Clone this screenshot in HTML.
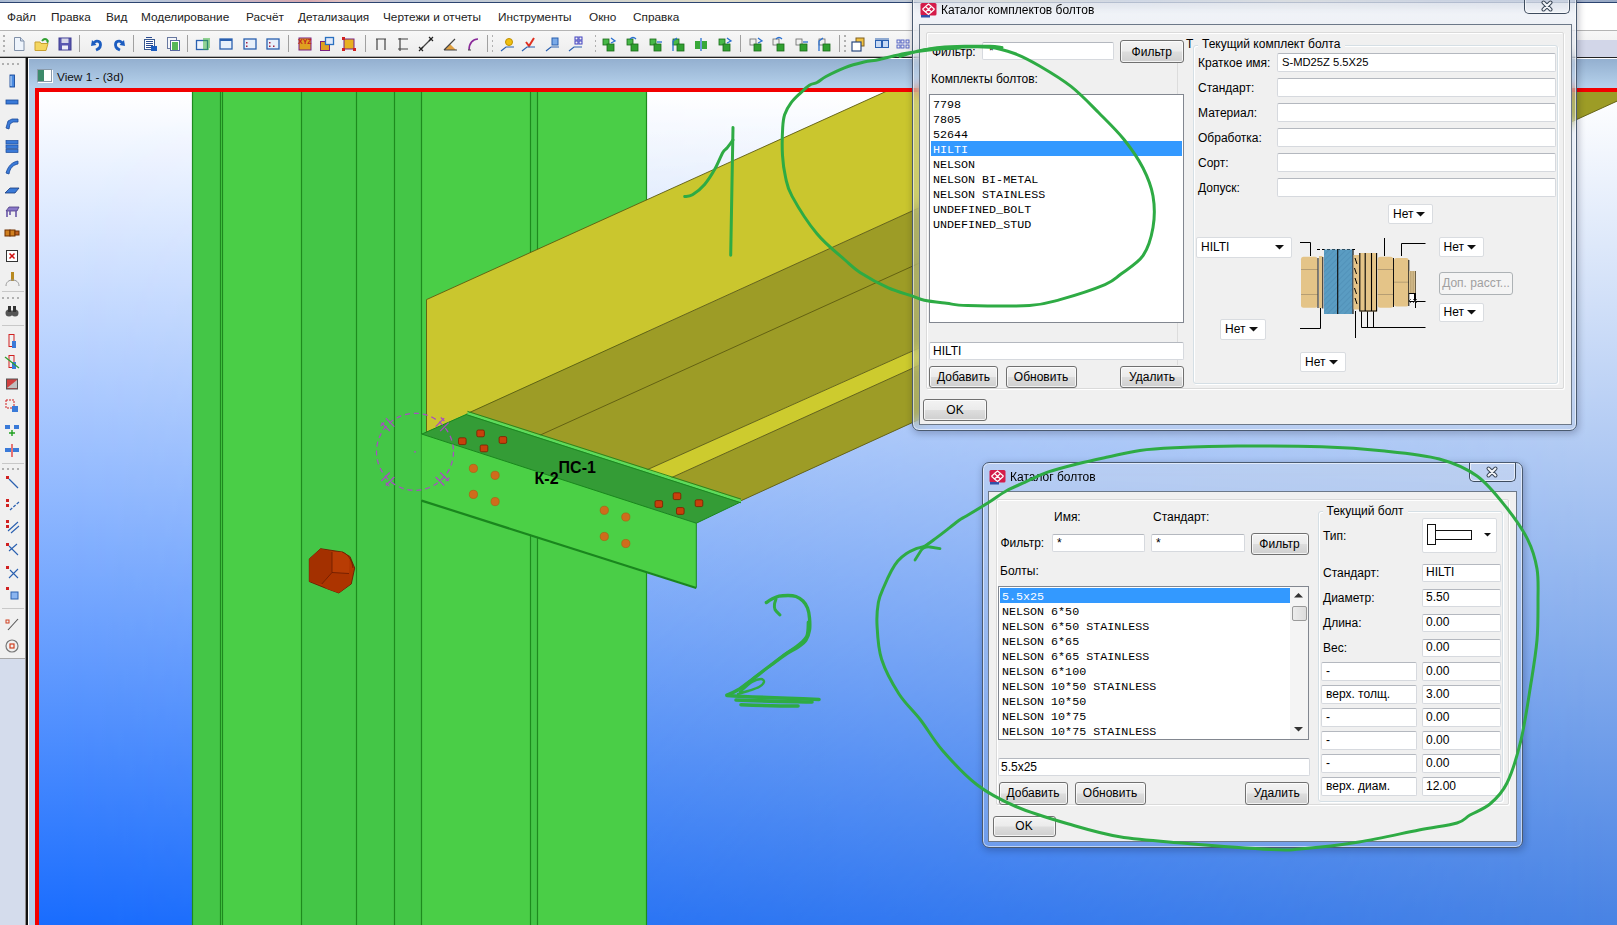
<!DOCTYPE html><html><head><meta charset="utf-8"><style>
*{margin:0;padding:0;box-sizing:border-box}
html,body{width:1617px;height:925px;overflow:hidden;background:#f0f0f0;font-family:"Liberation Sans",sans-serif;font-size:12px;color:#000;position:relative}
.a{position:absolute}
</style></head><body>
<div class="a" style="left:0px;top:0px;width:1617.00px;height:3.00px;background:linear-gradient(90deg,#a8b8d0,#d0d8e4 5%,#b8c4d8 10%,#d8a8b0 19%,#e0c0c0 21%,#b8c4d8 25%,#e0dcc8 45%,#b8c4d8 55%,#e0dcc0 62%,#c0cadc 70%,#d8d8d0 80%,#b0bcd4 90%,#98a8c4)"></div>
<div class="a" style="left:0px;top:2px;width:1617.00px;height:1.00px;background:#2c4470"></div>
<div class="a" style="left:0px;top:3px;width:1617.00px;height:28.00px;background:#fff;border-bottom:1px solid #b4b4b4"></div>
<div class="a" style="left:7px;top:10.13px;font:11.8px/14.16px 'Liberation Sans';color:#222;white-space:pre;">Файл</div>
<div class="a" style="left:51px;top:10.13px;font:11.8px/14.16px 'Liberation Sans';color:#222;white-space:pre;">Правка</div>
<div class="a" style="left:106px;top:10.13px;font:11.8px/14.16px 'Liberation Sans';color:#222;white-space:pre;">Вид</div>
<div class="a" style="left:141px;top:10.13px;font:11.8px/14.16px 'Liberation Sans';color:#222;white-space:pre;">Моделирование</div>
<div class="a" style="left:246px;top:10.13px;font:11.8px/14.16px 'Liberation Sans';color:#222;white-space:pre;">Расчёт</div>
<div class="a" style="left:298px;top:10.13px;font:11.8px/14.16px 'Liberation Sans';color:#222;white-space:pre;">Детализация</div>
<div class="a" style="left:383px;top:10.13px;font:11.8px/14.16px 'Liberation Sans';color:#222;white-space:pre;">Чертежи и отчеты</div>
<div class="a" style="left:498px;top:10.13px;font:11.8px/14.16px 'Liberation Sans';color:#222;white-space:pre;">Инструменты</div>
<div class="a" style="left:589px;top:10.13px;font:11.8px/14.16px 'Liberation Sans';color:#222;white-space:pre;">Окно</div>
<div class="a" style="left:633px;top:10.13px;font:11.8px/14.16px 'Liberation Sans';color:#222;white-space:pre;">Справка</div>
<div class="a" style="left:0px;top:31px;width:1617.00px;height:26.00px;background:linear-gradient(#f7f7f7,#ececec)"></div>
<div class="a" style="left:0px;top:56px;width:1617.00px;height:1.00px;background:#b0b0b0"></div>
<div class="a" style="left:0px;top:57px;width:1617.00px;height:1.00px;background:#222"></div>
<div class="a" style="left:0px;top:58px;width:26.00px;height:867.00px;background:#f0f0f0"></div>
<div class="a" style="left:0px;top:659px;width:25.00px;height:266.00px;background:#d4dcec"></div>
<div class="a" style="left:0px;top:658px;width:25.00px;height:1.00px;background:#a8a8a8"></div>
<div class="a" style="left:25px;top:58px;width:1.00px;height:867.00px;background:#909090"></div>
<div class="a" style="left:26px;top:57px;width:2.00px;height:868.00px;background:#111"></div>
<div class="a" style="left:3px;top:35px;width:1.50px;height:1.50px;background:#b0b0b0"></div>
<div class="a" style="left:3px;top:40px;width:1.50px;height:1.50px;background:#b0b0b0"></div>
<div class="a" style="left:3px;top:45px;width:1.50px;height:1.50px;background:#b0b0b0"></div>
<div class="a" style="left:3px;top:50px;width:1.50px;height:1.50px;background:#b0b0b0"></div>
<svg class="a" style="left:11.0px;top:35.5px" width="16" height="16" viewBox="0 0 16 16"><path d="M3.5 1.5h6l3.5 3.5v9.5h-9.5z" fill="#eef4fc" stroke="#8090a8"/><path d="M9.5 1.5v3.5h3.5" fill="#cfdcee" stroke="#8090a8"/></svg>
<svg class="a" style="left:33.5px;top:35.5px" width="16" height="16" viewBox="0 0 16 16"><path d="M1 6h5l1 1.5h7l-2 7h-11z" fill="#f4d660" stroke="#c8a030"/><path d="M8 5 Q11 1 14 5" stroke="#30a030" stroke-width="2" fill="none"/><path d="M12 5.5l3-1-1 3z" fill="#30a030"/></svg>
<svg class="a" style="left:56.5px;top:35.5px" width="16" height="16" viewBox="0 0 16 16"><rect x="2" y="2" width="12" height="12" fill="#5a58b0" stroke="#3c3a90"/><rect x="4.5" y="2.5" width="7" height="4.5" fill="#d8d8e8"/><rect x="5" y="9.5" width="6" height="4" fill="#f0f0f8"/></svg>
<div class="a" style="left:79px;top:35px;width:1.00px;height:17.00px;background:#a0a0a0"></div>
<svg class="a" style="left:88.0px;top:35.5px" width="16" height="16" viewBox="0 0 16 16"><path d="M4 4 L3 10 L8.5 9" fill="#1b5cc0"/><path d="M5 8 C8 3 14 5 12 11 C11 13 9 13.5 8 14" stroke="#1b5cc0" stroke-width="2.8" fill="none"/></svg>
<svg class="a" style="left:111.5px;top:35.5px" width="16" height="16" viewBox="0 0 16 16"><path d="M12 4 L13 10 L7.5 9" fill="#1b5cc0"/><path d="M11 8 C8 3 2 5 4 11 C5 13 7 13.5 8 14" stroke="#1b5cc0" stroke-width="2.8" fill="none"/></svg>
<div class="a" style="left:133px;top:35px;width:1.00px;height:17.00px;background:#a0a0a0"></div>
<svg class="a" style="left:142.0px;top:35.5px" width="16" height="16" viewBox="0 0 16 16"><rect x="2.5" y="3.5" width="10" height="10" fill="#fff" stroke="#3a5a90"/><path d="M4 1.5h6M4 5.5h7M4 7.5h7M4 9.5h7M4 11.5h5" stroke="#2a4a90" stroke-width="1.1"/><rect x="9" y="10" width="6" height="5" fill="#1b5cc0"/></svg>
<svg class="a" style="left:164.5px;top:35.5px" width="16" height="16" viewBox="0 0 16 16"><rect x="2.5" y="1.5" width="9" height="11" fill="#f4f6fa" stroke="#6878a0"/><rect x="5.5" y="4.5" width="9" height="10" fill="#fff" stroke="#5868a0"/><path d="M7 7h6M7 9h6M7 11h6M7 13h6" stroke="#20a020" stroke-width="1.3"/></svg>
<div class="a" style="left:187px;top:35px;width:1.00px;height:17.00px;background:#a0a0a0"></div>
<svg class="a" style="left:195.0px;top:35.5px" width="16" height="16" viewBox="0 0 16 16"><rect x="1.5" y="4.5" width="11" height="9" fill="#eef4fc" stroke="#2a60b0" stroke-width="1.3"/><path d="M8 3h7M8 5h7M8 7h7M8 9h7M8 11h7M8 13h6" stroke="#30b030" stroke-width="1.2"/></svg>
<svg class="a" style="left:218.0px;top:35.5px" width="16" height="16" viewBox="0 0 16 16"><rect x="2" y="3" width="12" height="10" fill="#e8f0fa" stroke="#2a60b0" stroke-width="1.3"/><rect x="2" y="3" width="12" height="2" fill="#2a60b0"/></svg>
<svg class="a" style="left:242.0px;top:35.5px" width="16" height="16" viewBox="0 0 16 16"><rect x="2" y="3" width="12" height="10" fill="#e8f0fa" stroke="#2a60b0" stroke-width="1.3"/><rect x="4" y="6" width="1.5" height="1.5" fill="#a02040"/><rect x="4" y="9.5" width="1.5" height="1.5" fill="#a02040"/></svg>
<svg class="a" style="left:265.0px;top:35.5px" width="16" height="16" viewBox="0 0 16 16"><rect x="2" y="3" width="12" height="10" fill="#e8f0fa" stroke="#2a60b0" stroke-width="1.3"/><rect x="4" y="6" width="1.5" height="1.5" fill="#a02040"/><rect x="4" y="9.5" width="1.5" height="1.5" fill="#a02040"/><rect x="8" y="9.5" width="1.5" height="1.5" fill="#a02040"/></svg>
<div class="a" style="left:287.5px;top:35px;width:1.00px;height:17.00px;background:#a0a0a0"></div>
<svg class="a" style="left:296.7px;top:35.5px" width="16" height="16" viewBox="0 0 16 16"><rect x="2" y="2" width="12" height="12" fill="#e0a020" stroke="#7a2080"/><text x="1" y="8" font-size="7" font-weight="bold" fill="#c02020" font-family="Liberation Sans">XYZ</text></svg>
<svg class="a" style="left:318.5px;top:35.5px" width="16" height="16" viewBox="0 0 16 16"><rect x="1.5" y="5.5" width="9" height="9" fill="#e0a020" stroke="#7a2080"/><rect x="6.5" y="1.5" width="8" height="7" fill="#dfe8f8" stroke="#2a70c0" stroke-width="1.3"/></svg>
<svg class="a" style="left:341.3px;top:35.5px" width="16" height="16" viewBox="0 0 16 16"><rect x="3" y="3" width="10" height="10" fill="#e8b020" stroke="#7a2080"/><rect x="1" y="1" width="3" height="3" fill="#d02020"/><rect x="12" y="12" width="3" height="3" fill="#d02020"/><rect x="1" y="12" width="3" height="3" fill="#d02020"/></svg>
<div class="a" style="left:364.5px;top:35px;width:1.00px;height:17.00px;background:#a0a0a0"></div>
<svg class="a" style="left:373.0px;top:35.5px" width="16" height="16" viewBox="0 0 16 16"><path d="M3 3h10M4 3v11M12 3v11" stroke="#444" stroke-width="1.2" fill="none"/></svg>
<svg class="a" style="left:394.7px;top:35.5px" width="16" height="16" viewBox="0 0 16 16"><path d="M3 3h10M3 13h10M5 2v13" stroke="#444" stroke-width="1.2" fill="none"/></svg>
<svg class="a" style="left:418.4px;top:35.5px" width="16" height="16" viewBox="0 0 16 16"><path d="M3 13 L13 3" stroke="#444" stroke-width="1.2"/><path d="M1 11l4 4M5 11l-4 4M11 1l4 4M15 1l-4 4" stroke="#222" stroke-width="1.2"/></svg>
<svg class="a" style="left:442.2px;top:35.5px" width="16" height="16" viewBox="0 0 16 16"><path d="M2 14h12L8 8z" fill="#e0a040"/><path d="M2 14 L13 3M2 14h13" stroke="#444" stroke-width="1.2" fill="none"/></svg>
<svg class="a" style="left:465.0px;top:35.5px" width="16" height="16" viewBox="0 0 16 16"><path d="M4 14 C4 7 8 3 13 3" stroke="#8a2a9a" stroke-width="1.6" fill="none"/><path d="M3 14h3" stroke="#444"/></svg>
<div class="a" style="left:486.5px;top:35px;width:1.00px;height:17.00px;background:#a0a0a0"></div>
<div class="a" style="left:491.5px;top:35px;width:1.50px;height:1.50px;background:#b0b0b0"></div>
<div class="a" style="left:491.5px;top:40px;width:1.50px;height:1.50px;background:#b0b0b0"></div>
<div class="a" style="left:491.5px;top:45px;width:1.50px;height:1.50px;background:#b0b0b0"></div>
<div class="a" style="left:491.5px;top:50px;width:1.50px;height:1.50px;background:#b0b0b0"></div>
<svg class="a" style="left:499.6px;top:35.5px" width="16" height="16" viewBox="0 0 16 16"><circle cx="9" cy="6" r="3.5" fill="#f0c010" stroke="#c09000"/><path d="M1 15 L6 11h8" stroke="#2a60b0" stroke-width="1.2" fill="none"/></svg>
<svg class="a" style="left:521.4px;top:35.5px" width="16" height="16" viewBox="0 0 16 16"><path d="M5 6 L8 10 L13 2" stroke="#e03020" stroke-width="2" fill="none"/><path d="M1 15 L6 11h8" stroke="#2a60b0" stroke-width="1.2" fill="none"/></svg>
<svg class="a" style="left:545.0px;top:35.5px" width="16" height="16" viewBox="0 0 16 16"><rect x="7" y="2" width="6" height="7" fill="#7aaae8" stroke="#2a60b0"/><path d="M1 15 L6 11h8" stroke="#2a60b0" stroke-width="1.2" fill="none"/></svg>
<svg class="a" style="left:567.9px;top:35.5px" width="16" height="16" viewBox="0 0 16 16"><rect x="7" y="1" width="3" height="3" fill="none" stroke="#4040c0"/><rect x="11" y="1" width="3" height="3" fill="none" stroke="#4040c0"/><rect x="7" y="5" width="3" height="3" fill="none" stroke="#4040c0"/><rect x="11" y="5" width="3" height="3" fill="none" stroke="#4040c0"/><path d="M1 15 L6 11h8" stroke="#2a60b0" stroke-width="1.2" fill="none"/></svg>
<div class="a" style="left:594.5px;top:35px;width:1.50px;height:1.50px;background:#b0b0b0"></div>
<div class="a" style="left:594.5px;top:40px;width:1.50px;height:1.50px;background:#b0b0b0"></div>
<div class="a" style="left:594.5px;top:45px;width:1.50px;height:1.50px;background:#b0b0b0"></div>
<div class="a" style="left:594.5px;top:50px;width:1.50px;height:1.50px;background:#b0b0b0"></div>
<svg class="a" style="left:601.4px;top:35.5px" width="16" height="16" viewBox="0 0 16 16"><rect x="2" y="3" width="6" height="6" fill="#48b848" stroke="#1a6a1a" stroke-width=".8"/><rect x="6" y="8" width="7" height="7" fill="#30a030" stroke="#1a6a1a" stroke-width=".8"/><path d="M10 2l4 3-4 2" stroke="#2a70d0" stroke-width="1.3" fill="none"/></svg>
<svg class="a" style="left:624.9px;top:35.5px" width="16" height="16" viewBox="0 0 16 16"><rect x="2" y="3" width="6" height="6" fill="#48b848" stroke="#1a6a1a" stroke-width=".8"/><rect x="6" y="8" width="7" height="7" fill="#30a030" stroke="#1a6a1a" stroke-width=".8"/><path d="M5 3 Q8 0 11 3" stroke="#2a70d0" stroke-width="1.3" fill="none"/></svg>
<svg class="a" style="left:648.3px;top:35.5px" width="16" height="16" viewBox="0 0 16 16"><rect x="2" y="3" width="6" height="6" fill="#48b848" stroke="#1a6a1a" stroke-width=".8"/><rect x="6" y="8" width="7" height="7" fill="#30a030" stroke="#1a6a1a" stroke-width=".8"/><path d="M9 6h5" stroke="#2a70d0" stroke-width="1.3"/></svg>
<svg class="a" style="left:670.8px;top:35.5px" width="16" height="16" viewBox="0 0 16 16"><rect x="2" y="3" width="6" height="6" fill="#48b848" stroke="#1a6a1a" stroke-width=".8"/><rect x="6" y="8" width="7" height="7" fill="#30a030" stroke="#1a6a1a" stroke-width=".8"/><path d="M2 15V5l4-3" stroke="#2a70d0" stroke-width="1.3" fill="none"/></svg>
<svg class="a" style="left:693.2px;top:35.5px" width="16" height="16" viewBox="0 0 16 16"><rect x="2" y="5" width="5" height="8" fill="#38a838"/><rect x="9" y="5" width="5" height="8" fill="#38a838"/><path d="M8 2v13" stroke="#2a70d0" stroke-width="1.3"/></svg>
<svg class="a" style="left:716.7px;top:35.5px" width="16" height="16" viewBox="0 0 16 16"><rect x="2" y="3" width="6" height="6" fill="#48b848" stroke="#1a6a1a" stroke-width=".8"/><rect x="6" y="8" width="7" height="7" fill="#30a030" stroke="#1a6a1a" stroke-width=".8"/><path d="M10 2l4 3-4 2" stroke="#2a70d0" stroke-width="1.3" fill="none"/></svg>
<div class="a" style="left:740px;top:35px;width:1.00px;height:17.00px;background:#a0a0a0"></div>
<svg class="a" style="left:748.3px;top:35.5px" width="16" height="16" viewBox="0 0 16 16"><rect x="2" y="3" width="6" height="6" fill="#f0f0f0" stroke="#666" stroke-width=".8"/><rect x="6" y="8" width="7" height="7" fill="#30a030" stroke="#1a6a1a" stroke-width=".8"/><path d="M10 2l4 3-4 2" stroke="#2a70d0" stroke-width="1.3" fill="none"/></svg>
<svg class="a" style="left:770.8px;top:35.5px" width="16" height="16" viewBox="0 0 16 16"><rect x="2" y="3" width="6" height="6" fill="#f0f0f0" stroke="#666" stroke-width=".8"/><rect x="6" y="8" width="7" height="7" fill="#30a030" stroke="#1a6a1a" stroke-width=".8"/><path d="M5 3 Q8 0 11 3" stroke="#2a70d0" stroke-width="1.3" fill="none"/></svg>
<svg class="a" style="left:794.2px;top:35.5px" width="16" height="16" viewBox="0 0 16 16"><rect x="2" y="3" width="6" height="6" fill="#f0f0f0" stroke="#666" stroke-width=".8"/><rect x="6" y="8" width="7" height="7" fill="#30a030" stroke="#1a6a1a" stroke-width=".8"/><path d="M9 6h5" stroke="#2a70d0" stroke-width="1.3"/></svg>
<svg class="a" style="left:816.7px;top:35.5px" width="16" height="16" viewBox="0 0 16 16"><rect x="2" y="3" width="6" height="6" fill="#f0f0f0" stroke="#666" stroke-width=".8"/><rect x="6" y="8" width="7" height="7" fill="#30a030" stroke="#1a6a1a" stroke-width=".8"/><path d="M2 15V5l4-3" stroke="#2a70d0" stroke-width="1.3" fill="none"/></svg>
<div class="a" style="left:838.5px;top:35px;width:1.00px;height:17.00px;background:#a0a0a0"></div>
<div class="a" style="left:844px;top:35px;width:1.50px;height:1.50px;background:#b0b0b0"></div>
<div class="a" style="left:844px;top:40px;width:1.50px;height:1.50px;background:#b0b0b0"></div>
<div class="a" style="left:844px;top:45px;width:1.50px;height:1.50px;background:#b0b0b0"></div>
<div class="a" style="left:844px;top:50px;width:1.50px;height:1.50px;background:#b0b0b0"></div>
<svg class="a" style="left:850.4px;top:35.5px" width="16" height="16" viewBox="0 0 16 16"><rect x="6" y="2" width="8" height="8" fill="#f0c040" stroke="#806020"/><rect x="2" y="6" width="9" height="9" fill="#fff" stroke="#2a4a80" stroke-width="1.2"/></svg>
<svg class="a" style="left:873.8px;top:35.5px" width="16" height="16" viewBox="0 0 16 16"><rect x="1.5" y="4.5" width="6" height="7" fill="#c8daf4" stroke="#2a60b0"/><rect x="8.5" y="4.5" width="6" height="7" fill="#c8daf4" stroke="#2a60b0"/><path d="M1 3h14" stroke="#2a60b0"/></svg>
<svg class="a" style="left:896.3px;top:35.5px" width="16" height="16" viewBox="0 0 16 16"><g fill="none" stroke="#4a5ac0" stroke-width=".9"><rect x="1" y="4" width="3" height="3"/><rect x="5" y="4" width="3" height="3"/><rect x="1" y="9" width="3" height="3"/><rect x="5" y="9" width="3" height="3"/><rect x="10" y="4" width="3" height="3"/><rect x="10" y="9" width="3" height="3"/></g></svg>
<div class="a" style="left:1577px;top:40px;width:40.00px;height:17.00px;background:#d2d6e8"></div>
<div class="a" style="left:2px;top:63px;width:1.50px;height:1.50px;background:#b0b0b0"></div>
<div class="a" style="left:7px;top:63px;width:1.50px;height:1.50px;background:#b0b0b0"></div>
<div class="a" style="left:12px;top:63px;width:1.50px;height:1.50px;background:#b0b0b0"></div>
<div class="a" style="left:17px;top:63px;width:1.50px;height:1.50px;background:#b0b0b0"></div>
<svg class="a" style="left:4.0px;top:72.8px" width="16" height="16" viewBox="0 0 16 16"><rect x="6" y="2" width="4.5" height="12" fill="#4a8ae0" stroke="#1a4a9a" stroke-width=".9"/><path d="M7 3v10" stroke="#d0e4fa"/></svg>
<svg class="a" style="left:4.0px;top:93.9px" width="16" height="16" viewBox="0 0 16 16"><rect x="2" y="6" width="12" height="4" fill="#3a7ad8" stroke="#1a4a9a" stroke-width=".8"/></svg>
<svg class="a" style="left:4.0px;top:115.0px" width="16" height="16" viewBox="0 0 16 16"><path d="M2 13 L4 6 L8 4 H14 V7 H9 L6 9 L5 14z" fill="#3a7ad8" stroke="#1a4a9a" stroke-width=".8"/></svg>
<svg class="a" style="left:4.0px;top:137.6px" width="16" height="16" viewBox="0 0 16 16"><rect x="2" y="2.5" width="12" height="3.5" fill="#3a7ad8" stroke="#1a4a9a" stroke-width=".7"/><rect x="2" y="7" width="12" height="3.5" fill="#3a7ad8" stroke="#1a4a9a" stroke-width=".7"/><rect x="2" y="11.5" width="12" height="3" fill="#3a7ad8" stroke="#1a4a9a" stroke-width=".7"/></svg>
<svg class="a" style="left:4.0px;top:158.7px" width="16" height="16" viewBox="0 0 16 16"><path d="M2 14 C4 7 8 3 14 2 V5 C9 6 6 9 5 15z" fill="#3a7ad8" stroke="#1a4a9a" stroke-width=".8"/></svg>
<svg class="a" style="left:4.0px;top:181.4px" width="16" height="16" viewBox="0 0 16 16"><path d="M1 12 L6 7 H15 L11 12z" fill="#3a7ad8" stroke="#1a3a7a" stroke-width=".8"/></svg>
<svg class="a" style="left:4.0px;top:202.5px" width="16" height="16" viewBox="0 0 16 16"><path d="M2 8 L5 4 H15 L13 8z" fill="#8a78c8" stroke="#4a3a80" stroke-width=".8"/><path d="M3 8v6M12 8v6M6 8v4" stroke="#6a58a8" stroke-width="1.6"/></svg>
<svg class="a" style="left:4.0px;top:225.1px" width="16" height="16" viewBox="0 0 16 16"><rect x="1" y="5" width="5" height="6" fill="#d08020" stroke="#703000"/><rect x="6" y="5" width="5" height="6" fill="#d08020" stroke="#703000"/><rect x="11" y="6" width="4" height="4" fill="#c06020" stroke="#703000"/></svg>
<svg class="a" style="left:4.0px;top:247.8px" width="16" height="16" viewBox="0 0 16 16"><rect x="2.5" y="2.5" width="11" height="11" fill="#fff" stroke="#333"/><path d="M5.5 5.5l5 5M10.5 5.5l-5 5" stroke="#d01010" stroke-width="1.5"/></svg>
<svg class="a" style="left:4.0px;top:270.5px" width="16" height="16" viewBox="0 0 16 16"><rect x="7" y="1" width="3" height="9" fill="#b88a20"/><path d="M2 15 C2 11 5 9 8.5 9 C12 9 15 11 15 15" stroke="#999" fill="none"/></svg>
<div class="a" style="left:2px;top:291px;width:22.00px;height:1.00px;background:#c8c8c8"></div>
<div class="a" style="left:2px;top:297px;width:1.50px;height:1.50px;background:#b0b0b0"></div>
<div class="a" style="left:7px;top:297px;width:1.50px;height:1.50px;background:#b0b0b0"></div>
<div class="a" style="left:12px;top:297px;width:1.50px;height:1.50px;background:#b0b0b0"></div>
<div class="a" style="left:17px;top:297px;width:1.50px;height:1.50px;background:#b0b0b0"></div>
<svg class="a" style="left:4.0px;top:303.0px" width="16" height="16" viewBox="0 0 16 16"><circle cx="5" cy="10" r="3.5" fill="#555"/><circle cx="11" cy="10" r="3.5" fill="#555"/><rect x="4" y="3" width="3" height="6" fill="#333"/><rect x="9" y="3" width="3" height="6" fill="#333"/></svg>
<div class="a" style="left:2px;top:325px;width:22.00px;height:1.00px;background:#c8c8c8"></div>
<svg class="a" style="left:4.0px;top:333.3px" width="16" height="16" viewBox="0 0 16 16"><rect x="5" y="1.5" width="5" height="12" fill="none" stroke="#d02020"/><rect x="8" y="8" width="4" height="7" fill="#3a7ad8"/></svg>
<svg class="a" style="left:4.0px;top:354.4px" width="16" height="16" viewBox="0 0 16 16"><rect x="5" y="1.5" width="5" height="12" fill="none" stroke="#d02020"/><rect x="8" y="8" width="4" height="7" fill="#3a7ad8"/><path d="M1 3 L15 14" stroke="#30a030" stroke-width="1.3"/></svg>
<svg class="a" style="left:4.0px;top:375.5px" width="16" height="16" viewBox="0 0 16 16"><rect x="2.5" y="3" width="11" height="10" fill="#d04040" stroke="#555"/><path d="M3 12 L13 4 V12z" fill="#c0c0c0"/></svg>
<svg class="a" style="left:4.0px;top:398.2px" width="16" height="16" viewBox="0 0 16 16"><rect x="2" y="2" width="8" height="8" fill="none" stroke="#d02020" stroke-dasharray="2 1"/><rect x="8" y="8" width="6" height="6" fill="#3a7ad8"/></svg>
<svg class="a" style="left:4.0px;top:420.9px" width="16" height="16" viewBox="0 0 16 16"><rect x="1" y="4" width="5" height="4" fill="#3a7ad8"/><rect x="10" y="4" width="5" height="4" fill="#3a7ad8"/><path d="M8 9v6M5 12h6" stroke="#20a020" stroke-width="1.4"/></svg>
<svg class="a" style="left:4.0px;top:442.0px" width="16" height="16" viewBox="0 0 16 16"><rect x="1" y="6" width="6" height="4" fill="#3a7ad8"/><rect x="9" y="6" width="6" height="4" fill="#3a7ad8"/><path d="M8 2v13" stroke="#e02020" stroke-width="1.2"/></svg>
<div class="a" style="left:2px;top:463px;width:22.00px;height:1.00px;background:#c8c8c8"></div>
<div class="a" style="left:2px;top:468px;width:1.50px;height:1.50px;background:#b0b0b0"></div>
<div class="a" style="left:7px;top:468px;width:1.50px;height:1.50px;background:#b0b0b0"></div>
<div class="a" style="left:12px;top:468px;width:1.50px;height:1.50px;background:#b0b0b0"></div>
<div class="a" style="left:17px;top:468px;width:1.50px;height:1.50px;background:#b0b0b0"></div>
<svg class="a" style="left:4.0px;top:474.4px" width="16" height="16" viewBox="0 0 16 16"><rect x="2" y="2" width="3" height="3" fill="#d02020"/><path d="M5 5 L14 14" stroke="#2a60b0" stroke-width="1.2"/></svg>
<svg class="a" style="left:4.0px;top:497.0px" width="16" height="16" viewBox="0 0 16 16"><rect x="2" y="2" width="3" height="3" fill="#d02020"/><rect x="2" y="7" width="3" height="3" fill="#d02020"/><path d="M6 13 L15 5" stroke="#2a60b0" stroke-width="1.2" stroke-dasharray="3 1.5"/></svg>
<svg class="a" style="left:4.0px;top:518.0px" width="16" height="16" viewBox="0 0 16 16"><rect x="2" y="2" width="3" height="3" fill="#d02020"/><rect x="2" y="7" width="3" height="3" fill="#d02020"/><path d="M4 13 L14 4M7 15 L15 8" stroke="#2a60b0" stroke-width="1.1"/></svg>
<svg class="a" style="left:4.0px;top:540.8px" width="16" height="16" viewBox="0 0 16 16"><rect x="2" y="2" width="3" height="3" fill="#d02020"/><path d="M5 10 L13 3M5 5 L14 14" stroke="#2a60b0" stroke-width="1.1"/></svg>
<svg class="a" style="left:4.0px;top:563.5px" width="16" height="16" viewBox="0 0 16 16"><rect x="2" y="2" width="3" height="3" fill="#d02020"/><path d="M5 14 L14 5M6 6 L14 14" stroke="#2a60b0" stroke-width="1.1"/></svg>
<svg class="a" style="left:4.0px;top:584.6px" width="16" height="16" viewBox="0 0 16 16"><rect x="2" y="2" width="3" height="3" fill="#d02020"/><rect x="7" y="7" width="7" height="7" fill="#8ab4f0" stroke="#2a60b0"/></svg>
<div class="a" style="left:2px;top:608px;width:22.00px;height:1.00px;background:#c8c8c8"></div>
<svg class="a" style="left:4.0px;top:615.4px" width="16" height="16" viewBox="0 0 16 16"><rect x="2" y="5" width="3" height="3" fill="none" stroke="#d04020"/><path d="M4 15 L14 4" stroke="#555" stroke-width="1.1"/></svg>
<svg class="a" style="left:4.0px;top:638.4px" width="16" height="16" viewBox="0 0 16 16"><circle cx="8" cy="8" r="6" fill="none" stroke="#777" stroke-width="1.2"/><rect x="6" y="6" width="4" height="4" fill="none" stroke="#d04020" stroke-width="1.2"/></svg>
<div class="a" style="left:28px;top:58px;width:1589.00px;height:30.00px;background:linear-gradient(#fff 0,#fff 1px,#94b0d0 1.5px,#b6d2ec 100%)"></div>
<div class="a" style="left:28px;top:58px;width:1.00px;height:867.00px;background:#fff"></div>
<div class="a" style="left:29px;top:88px;width:6.00px;height:837.00px;background:#b6d0ea"></div>
<div class="a" style="left:37px;top:69px;width:15.00px;height:13.00px;background:linear-gradient(90deg,#3d8a6a 0,#3d8a6a 45%,#fff 45%);border:1px solid #8a9aaa;box-shadow:1px 1px 0 #fff"></div>
<div class="a" style="left:57px;top:70.23px;font:11.8px/14.16px 'Liberation Sans';color:#111;white-space:pre;">View 1 - (3d)</div>
<svg class="a" style="left:0;top:0" width="1617" height="925" viewBox="0 0 1617 925">
<defs>
<linearGradient id="bg" x1="0" y1="92" x2="0" y2="925" gradientUnits="userSpaceOnUse">
<stop offset="0" stop-color="#ffffff"/><stop offset="0.988" stop-color="#1c6efe"/><stop offset="1" stop-color="#196cfe"/>
</linearGradient>
<linearGradient id="bg2" x1="0" y1="92" x2="0" y2="925" gradientUnits="userSpaceOnUse">
<stop offset="0" stop-color="#ffffff"/><stop offset="0.988" stop-color="#4a84e4"/><stop offset="1" stop-color="#4883e4"/>
</linearGradient>
<linearGradient id="hm" x1="65" y1="0" x2="1605" y2="0" gradientUnits="userSpaceOnUse">
<stop offset="0" stop-color="#000"/><stop offset="1" stop-color="#fff"/>
</linearGradient>
<mask id="hmask" maskUnits="userSpaceOnUse" x="0" y="0" width="1617" height="925"><rect x="0" y="0" width="1617" height="925" fill="url(#hm)"/></mask>
<clipPath id="vc"><rect x="39" y="92" width="1578" height="833"/></clipPath>
</defs>
<rect x="35" y="88" width="1582" height="837" fill="#f20000"/>
<g clip-path="url(#vc)">
<rect x="39" y="92" width="1578" height="833" fill="url(#bg)"/>
<rect x="39" y="92" width="1578" height="833" fill="url(#bg2)" mask="url(#hmask)"/>
<rect x="192" y="92" width="455" height="833" fill="#4ace47"/>
<rect x="192" y="92" width="29" height="833" fill="#44c647"/>
<rect x="301" y="92" width="121" height="833" fill="#44c647"/>
<rect x="530" y="92" width="7" height="833" fill="#44c647"/>
<g stroke="#1e8a1e" stroke-width="1.2">
<line x1="192.5" y1="92" x2="192.5" y2="925"/>
<line x1="220.5" y1="92" x2="220.5" y2="925"/>
<line x1="222.5" y1="92" x2="222.5" y2="925"/>
<line x1="301.5" y1="92" x2="301.5" y2="925"/>
<line x1="356.5" y1="92" x2="356.5" y2="925"/>
<line x1="394.5" y1="92" x2="394.5" y2="925"/>
<line x1="421.5" y1="92" x2="421.5" y2="925"/>
<line x1="530.5" y1="92" x2="530.5" y2="925"/>
<line x1="537.5" y1="92" x2="537.5" y2="925"/>
<line x1="646.5" y1="92" x2="646.5" y2="925"/>
</g>

<!-- beam -->
<polygon points="426.5,299.6 1700,-277.3 1700,-147.7 466.7,413.8 426.5,432.1" fill="#cac62e"/>
<polygon points="466.7,413.8 1700,-147.7 1700,-1.4 644.6,470.9" fill="#9d9c26"/>
<polygon points="644.6,470.9 1700,-1.4 1700,11 669.1,478.7" fill="#cdcb2e"/>
<polygon points="669.1,478.7 1700,11 1700,63.3 739.6,501.4" fill="#9d9c26"/>
<g stroke="#5c5a10" stroke-width="0.9" fill="none">
<line x1="426.5" y1="299.6" x2="1700" y2="-277.3"/>
<line x1="426.5" y1="299.6" x2="426.5" y2="432.1"/>
<line x1="466.7" y1="413.8" x2="1700" y2="-147.7"/>
<line x1="537.3" y1="436.4" x2="1700" y2="-91.1"/>
<line x1="644.6" y1="470.9" x2="1700" y2="-1.4"/>
<line x1="669.1" y1="478.7" x2="1700" y2="11"/>
<line x1="739.6" y1="501.4" x2="1700" y2="63.3"/>
</g>
<!-- angle K-2 -->
<polygon points="421.6,434 696.3,523.2 696.3,587.4 421.6,500" fill="#4bd046"/>
<polygon points="422,434 467.4,414 741,501.8 696.3,523.2" fill="#349c36"/>
<g stroke="#1a861e" fill="none">
<line x1="421.6" y1="434" x2="696.3" y2="523.2" stroke-width="1"/>
<line x1="696.3" y1="523.2" x2="696.3" y2="587.4" stroke-width="1"/>
<line x1="421.6" y1="500.6" x2="696.3" y2="588" stroke-width="2.2"/>
<line x1="696.3" y1="523.2" x2="741" y2="501.8" stroke-width="1"/>
<line x1="422" y1="434" x2="467.4" y2="414" stroke-width="1"/>
<line x1="467.4" y1="413.2" x2="741" y2="501" stroke="#5cdc5c" stroke-width="2.4"/>
<line x1="467.4" y1="411.3" x2="741" y2="499.1" stroke-width="0.9"/>
<line x1="467.4" y1="415" x2="741" y2="502.8" stroke-width="0.9"/>
</g>
<g fill="#c8400c" stroke="#7a2000" stroke-width="0.8">
<rect x="458.5" y="437.8" width="7.6" height="6.8" rx="1.5"/>
<rect x="476.8" y="430" width="7.6" height="6.8" rx="1.5"/>
<rect x="499.1" y="436.6" width="7.6" height="6.8" rx="1.5"/>
<rect x="480.2" y="445" width="7.6" height="6.8" rx="1.5"/>
<rect x="655" y="500.6" width="7.6" height="6.8" rx="1.5"/>
<rect x="673.2" y="492.8" width="7.6" height="6.8" rx="1.5"/>
<rect x="695.2" y="499.8" width="7.6" height="6.8" rx="1.5"/>
<rect x="676.5" y="507.6" width="7.6" height="6.8" rx="1.5"/>
</g>
<g fill="#cf6c1c" stroke="#b0580c" stroke-width="0.6">
<circle cx="473.4" cy="468.4" r="4.1"/><circle cx="495.1" cy="475.3" r="4.1"/>
<circle cx="473.4" cy="494.4" r="4.1"/><circle cx="495.1" cy="501.6" r="4.1"/>
<circle cx="604.3" cy="510.3" r="4.1"/><circle cx="625.8" cy="517" r="4.1"/>
<circle cx="604.3" cy="536.5" r="4.1"/><circle cx="625.8" cy="543.5" r="4.1"/>
</g>
<text x="534.6" y="484" font-family="Liberation Sans" font-weight="bold" font-size="16" fill="#000">К-2</text>
<text x="558.6" y="472.9" font-family="Liberation Sans" font-weight="bold" font-size="16" fill="#000">ПС-1</text>
<!-- nut -->
<polygon points="309.3,558.9 320.6,548.7 342.2,552 350,556.6 354.7,568 351.3,583.9 338.8,593 326.3,588.4 309.3,581.6" fill="#b03600" stroke="#6a1c00" stroke-width="0.9"/>
<polygon points="309.3,558.9 320.6,548.7 332,552 332,572.5 321.8,584 309.3,581.6" fill="#a33000"/>
<polygon points="332,552 342.2,552 349.5,556.5 349,573.5 332,572.5" fill="#b83c04"/>
<polygon points="332,572.5 349,573.5 351,583.5 338.8,593 326.3,588.4 321.8,584" fill="#ac3400"/>
<g stroke="#6a1c00" stroke-width="0.8" fill="none">
<polyline points="332,552 332,572.5 321.8,584"/>
<line x1="332" y1="572.5" x2="349" y2="573.5"/>
<path d="M342.2,552 C348,554 352,560 353,568"/>
</g>
<!-- dashed circle -->
<circle cx="415" cy="451.8" r="38.5" fill="none" stroke="#a94cc4" stroke-width="1.25" stroke-dasharray="5 4"/>
<circle cx="415" cy="451.8" r="0.9" fill="#a94cc4"/>
<g stroke="#a94cc4" stroke-width="1.2">
<line x1="389.8" y1="431.1" x2="381.3" y2="422.6"/>
<line x1="394.3" y1="426.6" x2="385.8" y2="418.1"/>
<line x1="380.7" y1="426.0" x2="384.2" y2="422.5"/>
<line x1="435.7" y1="426.6" x2="444.2" y2="418.1"/>
<line x1="440.2" y1="431.1" x2="448.7" y2="422.6"/>
<line x1="440.8" y1="417.5" x2="444.3" y2="421.0"/>
<line x1="394.3" y1="477.0" x2="385.8" y2="485.5"/>
<line x1="389.8" y1="472.5" x2="381.3" y2="481.0"/>
<line x1="389.2" y1="486.1" x2="385.7" y2="482.6"/>
<line x1="440.2" y1="472.5" x2="448.7" y2="481.0"/>
<line x1="435.7" y1="477.0" x2="444.2" y2="485.5"/>
<line x1="449.3" y1="477.6" x2="445.8" y2="481.1"/>
</g>

</g></svg>
<div class="a" style="left:912px;top:-7px;width:665.00px;height:438.00px;border-radius:7px;box-shadow:1px 2px 7px 1px rgba(0,0,30,.22)"></div>
<div class="a" style="left:912px;top:-7px;width:665.00px;height:438.00px;border:1px solid #4a5a70;border-radius:7px;backdrop-filter:blur(6px);-webkit-backdrop-filter:blur(6px);background:linear-gradient(rgba(215,222,235,.36),rgba(200,210,228,.3));box-shadow:inset 0 0 0 1px rgba(255,255,255,.55)"></div>
<div class="a" style="left:918.5px;top:23.5px;width:653.00px;height:401.50px;border:1px solid #6c7888;background:#fff"></div>
<div class="a" style="left:919.5px;top:24.5px;width:651.00px;height:399.50px;background:#f0f0f0"></div>
<svg class="a" style="left:920px;top:2.3000000000000007px" width="17" height="16" viewBox="0 0 17 16"><rect x="0.5" y="1" width="16" height="12.5" rx="1.5" fill="#d41c4a"/><rect x="1" y="13" width="9" height="2.5" fill="#3050a8"/><path d="M2.5 7.2 L5.5 4.5 L8.5 7.2 L11.5 4.5 L14.5 7.2 M2.5 7.2 L5.5 10 L8.5 7.2 L11.5 10 L14.5 7.2 M5.5 4.5 L8.5 2 L11.5 4.5 M5.5 10 L8.5 12.5 L11.5 10" stroke="#fff" stroke-width="1.2" fill="none"/></svg>
<div class="a" style="left:941px;top:2.94px;font:12px/14.4px 'Liberation Sans';color:#000;white-space:pre;">Каталог комплектов болтов</div>
<div class="a" style="left:1524px;top:-2px;width:46.00px;height:16.00px;border:1px solid #3e4c5e;border-top:none;border-radius:0 0 5px 5px;box-shadow:inset 0 0 0 1px rgba(255,255,255,.6);background:rgba(255,255,255,.08)"></div>
<svg class="a" style="left:1539.0px;top:-1.0px" width="16" height="14" viewBox="0 0 16 14"><path d="M4.5 3.5 L11.5 10.5 M11.5 3.5 L4.5 10.5" stroke="#3a4656" stroke-width="4" stroke-linecap="round"/><path d="M4.5 3.5 L11.5 10.5 M11.5 3.5 L4.5 10.5" stroke="#f4f6fa" stroke-width="2" stroke-linecap="round"/></svg>
<div class="a" style="left:926px;top:32px;width:638.00px;height:357.00px;border:1px solid #dadada;border-radius:2px;box-shadow:inset 1px 1px 0 #fff,1px 1px 0 #fff"></div>
<div class="a" style="left:1176.5px;top:63px;width:1.00px;height:302.00px;background:#dcdcdc"></div>
<div class="a" style="left:932px;top:45.34px;font:12px/14.4px 'Liberation Sans';color:#000;white-space:pre;">Фильтр:</div>
<div class="a" style="left:982px;top:42px;width:132.00px;height:18.00px;background:#fff;border:1px solid #d6d9de;border-top-color:#b4b8bf;border-radius:2px"></div>
<div class="a" style="left:989px;top:43.94px;font:12px/14.4px 'Liberation Sans';color:#000;white-space:pre;">*</div>
<div class="a" style="left:1120px;top:40px;width:63.50px;height:23.00px;background:linear-gradient(#f3f3f3 0,#ebebeb 48%,#dddddd 52%,#cfcfcf 100%);border:1px solid #707070;border-radius:3px;box-shadow:inset 0 0 0 1px rgba(255,255,255,.75)"></div>
<div class="a" style="left:1120px;top:44.50px;width:63.5px;text-align:center;font:12px/14px 'Liberation Sans';color:#000;white-space:pre">Фильтр</div>
<div class="a" style="left:931px;top:71.94px;font:12px/14.4px 'Liberation Sans';color:#000;white-space:pre;">Комплекты болтов:</div>
<div class="a" style="left:929px;top:94px;width:255.00px;height:228.50px;background:#fff;border:1px solid #828790"></div>
<div class="a" style="left:933px;top:98.16px;font:11.7px/14.04px 'Liberation Mono';color:#000;white-space:pre;">7798</div>
<div class="a" style="left:933px;top:113.16px;font:11.7px/14.04px 'Liberation Mono';color:#000;white-space:pre;">7805</div>
<div class="a" style="left:933px;top:128.16px;font:11.7px/14.04px 'Liberation Mono';color:#000;white-space:pre;">52644</div>
<div class="a" style="left:931px;top:141px;width:251.00px;height:15.00px;background:#3399ff"></div>
<div class="a" style="left:933px;top:143.16px;font:11.7px/14.04px 'Liberation Mono';color:#fff;white-space:pre;">HILTI</div>
<div class="a" style="left:933px;top:158.16px;font:11.7px/14.04px 'Liberation Mono';color:#000;white-space:pre;">NELSON</div>
<div class="a" style="left:933px;top:173.16px;font:11.7px/14.04px 'Liberation Mono';color:#000;white-space:pre;">NELSON BI-METAL</div>
<div class="a" style="left:933px;top:188.16px;font:11.7px/14.04px 'Liberation Mono';color:#000;white-space:pre;">NELSON STAINLESS</div>
<div class="a" style="left:933px;top:203.16px;font:11.7px/14.04px 'Liberation Mono';color:#000;white-space:pre;">UNDEFINED_BOLT</div>
<div class="a" style="left:933px;top:218.16px;font:11.7px/14.04px 'Liberation Mono';color:#000;white-space:pre;">UNDEFINED_STUD</div>
<div class="a" style="left:929px;top:342px;width:255.00px;height:17.50px;background:#fff;border:1px solid #d6d9de;border-top-color:#b4b8bf;border-radius:2px"></div>
<div class="a" style="left:933px;top:343.69px;font:12px/14.4px 'Liberation Sans';color:#000;white-space:pre;">HILTI</div>
<div class="a" style="left:929px;top:366px;width:69.00px;height:21.50px;background:linear-gradient(#f3f3f3 0,#ebebeb 48%,#dddddd 52%,#cfcfcf 100%);border:1px solid #707070;border-radius:3px;box-shadow:inset 0 0 0 1px rgba(255,255,255,.75)"></div>
<div class="a" style="left:929px;top:369.75px;width:69px;text-align:center;font:12px/14px 'Liberation Sans';color:#000;white-space:pre">Добавить</div>
<div class="a" style="left:1005.5px;top:366px;width:71.00px;height:21.50px;background:linear-gradient(#f3f3f3 0,#ebebeb 48%,#dddddd 52%,#cfcfcf 100%);border:1px solid #707070;border-radius:3px;box-shadow:inset 0 0 0 1px rgba(255,255,255,.75)"></div>
<div class="a" style="left:1005.5px;top:369.75px;width:71.0px;text-align:center;font:12px/14px 'Liberation Sans';color:#000;white-space:pre">Обновить</div>
<div class="a" style="left:1120px;top:366px;width:64.00px;height:21.50px;background:linear-gradient(#f3f3f3 0,#ebebeb 48%,#dddddd 52%,#cfcfcf 100%);border:1px solid #707070;border-radius:3px;box-shadow:inset 0 0 0 1px rgba(255,255,255,.75)"></div>
<div class="a" style="left:1120px;top:369.75px;width:64px;text-align:center;font:12px/14px 'Liberation Sans';color:#000;white-space:pre">Удалить</div>
<div class="a" style="left:923px;top:398.5px;width:64.00px;height:22.00px;background:linear-gradient(#f3f3f3 0,#ebebeb 48%,#dddddd 52%,#cfcfcf 100%);border:1px solid #707070;border-radius:3px;box-shadow:inset 0 0 0 1px rgba(255,255,255,.75)"></div>
<div class="a" style="left:923px;top:402.50px;width:64px;text-align:center;font:12px/14px 'Liberation Sans';color:#000;white-space:pre">OK</div>
<div class="a" style="left:1193px;top:45px;width:365.00px;height:339.00px;border:1px solid #d5dfe5;border-radius:3px;box-shadow:inset 1px 1px 0 #fff,1px 1px 0 #fff"></div>
<div class="a" style="left:1198px;top:38px;width:147.00px;height:12.00px;background:#f0f0f0"></div>
<div class="a" style="left:1186px;top:37.14px;font:12px/14.4px 'Liberation Sans';color:#000;white-space:pre;">T</div>
<div class="a" style="left:1202px;top:37.24px;font:12px/14.4px 'Liberation Sans';color:#000;white-space:pre;">Текущий комплект болта</div>
<div class="a" style="left:1198px;top:55.64px;font:12px/14.4px 'Liberation Sans';color:#000;white-space:pre;">Краткое имя:</div>
<div class="a" style="left:1277px;top:53px;width:279.00px;height:19.00px;background:#fff;border:1px solid #d6d9de;border-top-color:#b4b8bf;border-radius:2px"></div>
<div class="a" style="left:1198px;top:80.64px;font:12px/14.4px 'Liberation Sans';color:#000;white-space:pre;">Стандарт:</div>
<div class="a" style="left:1277px;top:78px;width:279.00px;height:19.00px;background:#fff;border:1px solid #d6d9de;border-top-color:#b4b8bf;border-radius:2px"></div>
<div class="a" style="left:1198px;top:105.64px;font:12px/14.4px 'Liberation Sans';color:#000;white-space:pre;">Материал:</div>
<div class="a" style="left:1277px;top:103px;width:279.00px;height:19.00px;background:#fff;border:1px solid #d6d9de;border-top-color:#b4b8bf;border-radius:2px"></div>
<div class="a" style="left:1198px;top:130.64px;font:12px/14.4px 'Liberation Sans';color:#000;white-space:pre;">Обработка:</div>
<div class="a" style="left:1277px;top:128px;width:279.00px;height:19.00px;background:#fff;border:1px solid #d6d9de;border-top-color:#b4b8bf;border-radius:2px"></div>
<div class="a" style="left:1198px;top:155.64px;font:12px/14.4px 'Liberation Sans';color:#000;white-space:pre;">Сорт:</div>
<div class="a" style="left:1277px;top:153px;width:279.00px;height:19.00px;background:#fff;border:1px solid #d6d9de;border-top-color:#b4b8bf;border-radius:2px"></div>
<div class="a" style="left:1198px;top:180.64px;font:12px/14.4px 'Liberation Sans';color:#000;white-space:pre;">Допуск:</div>
<div class="a" style="left:1277px;top:178px;width:279.00px;height:19.00px;background:#fff;border:1px solid #d6d9de;border-top-color:#b4b8bf;border-radius:2px"></div>
<div class="a" style="left:1282px;top:56.40px;font:11.2px/13.44px 'Liberation Sans';color:#000;white-space:pre;">S-MD25Z 5.5X25</div>
<div class="a" style="left:1388px;top:204px;width:45.00px;height:20.00px;background:#fff;border:1px solid #d9dce0;border-radius:2px"></div>
<div class="a" style="left:1393px;top:206.94px;font:12px/14.4px 'Liberation Sans';color:#000;white-space:pre;">Нет</div>
<svg class="a" style="left:1416px;top:212.0px" width="9" height="5"><polygon points="0,0 9,0 4.5,4.5" fill="#111"/></svg>
<div class="a" style="left:1196px;top:237px;width:96.00px;height:20.50px;background:#fff;border:1px solid #d9dce0;border-radius:2px"></div>
<div class="a" style="left:1201px;top:240.19px;font:12px/14.4px 'Liberation Sans';color:#000;white-space:pre;">HILTI</div>
<svg class="a" style="left:1275px;top:245.25px" width="9" height="5"><polygon points="0,0 9,0 4.5,4.5" fill="#111"/></svg>
<div class="a" style="left:1438.5px;top:237px;width:45.50px;height:20.00px;background:#fff;border:1px solid #d9dce0;border-radius:2px"></div>
<div class="a" style="left:1443.5px;top:239.94px;font:12px/14.4px 'Liberation Sans';color:#000;white-space:pre;">Нет</div>
<svg class="a" style="left:1467px;top:245.0px" width="9" height="5"><polygon points="0,0 9,0 4.5,4.5" fill="#111"/></svg>
<div class="a" style="left:1439px;top:272px;width:74.00px;height:22.50px;background:#f4f4f4;border:1px solid #adb2b5;border-radius:3px"></div>
<div class="a" style="left:1439px;top:276.25px;width:74px;text-align:center;font:12px/14px 'Liberation Sans';color:#a0a0a0;white-space:pre">Доп. расст...</div>
<div class="a" style="left:1438.5px;top:302.5px;width:45.50px;height:19.50px;background:#fff;border:1px solid #d9dce0;border-radius:2px"></div>
<div class="a" style="left:1443.5px;top:305.19px;font:12px/14.4px 'Liberation Sans';color:#000;white-space:pre;">Нет</div>
<svg class="a" style="left:1467px;top:310.25px" width="9" height="5"><polygon points="0,0 9,0 4.5,4.5" fill="#111"/></svg>
<div class="a" style="left:1220px;top:319px;width:46.00px;height:20.50px;background:#fff;border:1px solid #d9dce0;border-radius:2px"></div>
<div class="a" style="left:1225px;top:322.19px;font:12px/14.4px 'Liberation Sans';color:#000;white-space:pre;">Нет</div>
<svg class="a" style="left:1249px;top:327.25px" width="9" height="5"><polygon points="0,0 9,0 4.5,4.5" fill="#111"/></svg>
<div class="a" style="left:1300px;top:352px;width:46.00px;height:20.00px;background:#fff;border:1px solid #d9dce0;border-radius:2px"></div>
<div class="a" style="left:1305px;top:354.94px;font:12px/14.4px 'Liberation Sans';color:#000;white-space:pre;">Нет</div>
<svg class="a" style="left:1329px;top:360.0px" width="9" height="5"><polygon points="0,0 9,0 4.5,4.5" fill="#111"/></svg>
<svg class="a" style="left:1295px;top:233px" width="135" height="110" viewBox="1295 233 135 110">
<defs><pattern id="hatch" width="4" height="4" patternUnits="userSpaceOnUse" patternTransform="rotate(45)"><rect width="4" height="4" fill="#5a9cc2"/><line x1="0" y1="0" x2="0" y2="4" stroke="#4a88b0" stroke-width="1"/></pattern></defs>
<g stroke="#000" stroke-width="1" fill="none">
<polyline points="1300,242.5 1310.5,242.5 1310.5,256"/>
<polyline points="1300,328.5 1320.5,328.5 1320.5,308"/>
<line x1="1317" y1="249.5" x2="1357" y2="249.5" stroke-dasharray="3 2"/>
<line x1="1384.5" y1="238" x2="1384.5" y2="256"/>
<polyline points="1401.5,256 1401.5,243.5 1425.5,243.5"/>
<line x1="1355.5" y1="311" x2="1355.5" y2="338"/>
<polyline points="1361.5,311 1361.5,327.5 1425.5,327.5"/>
<line x1="1367.5" y1="311" x2="1367.5" y2="327.5"/>
<line x1="1373.5" y1="311" x2="1373.5" y2="327.5"/>
<line x1="1405" y1="301.5" x2="1425.5" y2="301.5"/>
<line x1="1415.5" y1="271" x2="1415.5" y2="308"/>
<rect x="1408.5" y="293.5" width="6" height="8" fill="#fff"/>
</g>
<g stroke="#333" stroke-width=".8"><path d="M1407 299l4 4M1411 299l-4 4M1413 299l4 4M1417 299l-4 4"/></g>
<rect x="1301" y="256.7" width="16.5" height="51" rx="2.5" fill="#e4c488"/>
<path d="M1301 269.5h16.5M1301 294.5h16.5" stroke="#b09a70" stroke-width=".9"/>
<line x1="1318" y1="258" x2="1318" y2="308" stroke="#111" stroke-width="1"/>
<rect x="1319" y="256" width="3.5" height="52" fill="#e4c488"/>
<line x1="1322.8" y1="257" x2="1322.8" y2="308.5" stroke="#111" stroke-width="1"/>
<rect x="1324" y="249.5" width="13.5" height="64.5" fill="url(#hatch)"/>
<rect x="1338" y="249.5" width="14.5" height="64.5" fill="url(#hatch)"/>
<line x1="1337.7" y1="249.5" x2="1337.7" y2="314" stroke="#000" stroke-width="1.1"/>
<line x1="1353" y1="249.5" x2="1353" y2="314" stroke="#000" stroke-width="1.1"/>
<rect x="1353.5" y="255" width="5.5" height="54.5" fill="#e4c488"/>
<path d="M1355 258l2 6M1354.5 268l2 6M1355 278l2 6M1354.5 288l2 6M1355 298l2 6" stroke="#000" stroke-width="1"/>
<rect x="1359.5" y="253" width="17.5" height="58.5" fill="#e4c488"/>
<path d="M1359.8 253v58.5M1365.2 253v58.5M1371.5 253v58.5M1376.6 253v58.5M1359.5 311h17.5" stroke="#000" stroke-width="1.1"/>
<rect x="1377.7" y="256.7" width="15.5" height="51" rx="2.5" fill="#e4c488"/>
<path d="M1377.7 269.5h15.5M1377.7 294.5h15.5" stroke="#b09a70" stroke-width=".9"/>
<line x1="1393.5" y1="258" x2="1393.5" y2="307" stroke="#111" stroke-width="1"/>
<rect x="1394" y="258" width="14.8" height="48.5" rx="2.5" fill="#e4c488"/>
<path d="M1394 282.2h14.8" stroke="#b09a70" stroke-width=".9"/>
<line x1="1408.8" y1="260" x2="1408.8" y2="306" stroke="#111" stroke-width="1"/>
<rect x="1409" y="271" width="6.5" height="22" fill="#d8c090"/>
<path d="M1410.5 271v22M1412 271v22M1413.5 271v22" stroke="#a89060" stroke-width=".5"/>
</svg>
<div class="a" style="left:981.5px;top:461.8px;width:541.00px;height:386.20px;border-radius:7px;box-shadow:1px 2px 7px 1px rgba(0,0,30,.22)"></div>
<div class="a" style="left:981.5px;top:461.8px;width:541.00px;height:386.20px;border:1px solid #4a5a70;border-radius:7px;backdrop-filter:blur(6px);-webkit-backdrop-filter:blur(6px);background:linear-gradient(rgba(215,222,235,.36),rgba(200,210,228,.3));box-shadow:inset 0 0 0 1px rgba(255,255,255,.55)"></div>
<div class="a" style="left:987.5px;top:490.5px;width:529.00px;height:351.50px;border:1px solid #6c7888;background:#fff"></div>
<div class="a" style="left:988.5px;top:491.5px;width:527.00px;height:349.50px;background:#f0f0f0"></div>
<svg class="a" style="left:989px;top:469.3px" width="17" height="16" viewBox="0 0 17 16"><rect x="0.5" y="1" width="16" height="12.5" rx="1.5" fill="#d41c4a"/><rect x="1" y="13" width="9" height="2.5" fill="#3050a8"/><path d="M2.5 7.2 L5.5 4.5 L8.5 7.2 L11.5 4.5 L14.5 7.2 M2.5 7.2 L5.5 10 L8.5 7.2 L11.5 10 L14.5 7.2 M5.5 4.5 L8.5 2 L11.5 4.5 M5.5 10 L8.5 12.5 L11.5 10" stroke="#fff" stroke-width="1.2" fill="none"/></svg>
<div class="a" style="left:1010px;top:469.94px;font:12px/14.4px 'Liberation Sans';color:#000;white-space:pre;">Каталог болтов</div>
<div class="a" style="left:1469px;top:462.5px;width:46.50px;height:19.00px;border:1px solid #3e4c5e;border-top:none;border-radius:0 0 5px 5px;box-shadow:inset 0 0 0 1px rgba(255,255,255,.6);background:rgba(255,255,255,.08)"></div>
<svg class="a" style="left:1484.25px;top:465.0px" width="16" height="14" viewBox="0 0 16 14"><path d="M4.5 3.5 L11.5 10.5 M11.5 3.5 L4.5 10.5" stroke="#3a4656" stroke-width="4" stroke-linecap="round"/><path d="M4.5 3.5 L11.5 10.5 M11.5 3.5 L4.5 10.5" stroke="#f4f6fa" stroke-width="2" stroke-linecap="round"/></svg>
<div class="a" style="left:995.5px;top:499px;width:513.00px;height:306.00px;border:1px solid #dadada;border-radius:2px;box-shadow:inset 1px 1px 0 #fff,1px 1px 0 #fff"></div>
<div class="a" style="left:1054px;top:509.94px;font:12px/14.4px 'Liberation Sans';color:#000;white-space:pre;">Имя:</div>
<div class="a" style="left:1153px;top:509.94px;font:12px/14.4px 'Liberation Sans';color:#000;white-space:pre;">Стандарт:</div>
<div class="a" style="left:1000.5px;top:536.34px;font:12px/14.4px 'Liberation Sans';color:#000;white-space:pre;">Фильтр:</div>
<div class="a" style="left:1051.5px;top:534px;width:93.50px;height:18.00px;background:#fff;border:1px solid #d6d9de;border-top-color:#b4b8bf;border-radius:2px"></div>
<div class="a" style="left:1057px;top:535.94px;font:12px/14.4px 'Liberation Sans';color:#000;white-space:pre;">*</div>
<div class="a" style="left:1150.5px;top:534px;width:94.00px;height:18.00px;background:#fff;border:1px solid #d6d9de;border-top-color:#b4b8bf;border-radius:2px"></div>
<div class="a" style="left:1156px;top:535.94px;font:12px/14.4px 'Liberation Sans';color:#000;white-space:pre;">*</div>
<div class="a" style="left:1250.5px;top:532.5px;width:58.00px;height:22.50px;background:linear-gradient(#f3f3f3 0,#ebebeb 48%,#dddddd 52%,#cfcfcf 100%);border:1px solid #707070;border-radius:3px;box-shadow:inset 0 0 0 1px rgba(255,255,255,.75)"></div>
<div class="a" style="left:1250.5px;top:536.75px;width:58.0px;text-align:center;font:12px/14px 'Liberation Sans';color:#000;white-space:pre">Фильтр</div>
<div class="a" style="left:1000px;top:564.34px;font:12px/14.4px 'Liberation Sans';color:#000;white-space:pre;">Болты:</div>
<div class="a" style="left:998px;top:585.5px;width:311.00px;height:154.00px;background:#fff;border:1px solid #828790"></div>
<div class="a" style="left:1000px;top:588px;width:290.00px;height:14.50px;background:#3399ff"></div>
<div class="a" style="left:1002px;top:590.16px;font:11.7px/14.04px 'Liberation Mono';color:#fff;white-space:pre;">5.5x25</div>
<div class="a" style="left:1002px;top:605.16px;font:11.7px/14.04px 'Liberation Mono';color:#000;white-space:pre;">NELSON 6*50</div>
<div class="a" style="left:1002px;top:620.16px;font:11.7px/14.04px 'Liberation Mono';color:#000;white-space:pre;">NELSON 6*50 STAINLESS</div>
<div class="a" style="left:1002px;top:635.16px;font:11.7px/14.04px 'Liberation Mono';color:#000;white-space:pre;">NELSON 6*65</div>
<div class="a" style="left:1002px;top:650.16px;font:11.7px/14.04px 'Liberation Mono';color:#000;white-space:pre;">NELSON 6*65 STAINLESS</div>
<div class="a" style="left:1002px;top:665.16px;font:11.7px/14.04px 'Liberation Mono';color:#000;white-space:pre;">NELSON 6*100</div>
<div class="a" style="left:1002px;top:680.16px;font:11.7px/14.04px 'Liberation Mono';color:#000;white-space:pre;">NELSON 10*50 STAINLESS</div>
<div class="a" style="left:1002px;top:695.16px;font:11.7px/14.04px 'Liberation Mono';color:#000;white-space:pre;">NELSON 10*50</div>
<div class="a" style="left:1002px;top:710.16px;font:11.7px/14.04px 'Liberation Mono';color:#000;white-space:pre;">NELSON 10*75</div>
<div class="a" style="left:1002px;top:725.16px;font:11.7px/14.04px 'Liberation Mono';color:#000;white-space:pre;">NELSON 10*75 STAINLESS</div>
<div class="a" style="left:1290px;top:587px;width:18.00px;height:151.50px;background:#f4f4f4"></div>
<svg class="a" style="left:1294px;top:593px" width="9" height="5"><polygon points="0,4.5 9,4.5 4.5,0" fill="#333"/></svg>
<svg class="a" style="left:1294px;top:727px" width="9" height="5"><polygon points="0,0 9,0 4.5,4.5" fill="#333"/></svg>
<div class="a" style="left:1291.5px;top:606px;width:15.00px;height:15.00px;border:1px solid #9a9a9a;border-radius:2px;background:linear-gradient(90deg,#ececec,#dcdcdc)"></div>
<div class="a" style="left:997.5px;top:758px;width:312.00px;height:18.00px;background:#fff;border:1px solid #d6d9de;border-top-color:#b4b8bf;border-radius:2px"></div>
<div class="a" style="left:1001px;top:759.94px;font:12px/14.4px 'Liberation Sans';color:#000;white-space:pre;">5.5x25</div>
<div class="a" style="left:998.5px;top:782px;width:69.00px;height:22.50px;background:linear-gradient(#f3f3f3 0,#ebebeb 48%,#dddddd 52%,#cfcfcf 100%);border:1px solid #707070;border-radius:3px;box-shadow:inset 0 0 0 1px rgba(255,255,255,.75)"></div>
<div class="a" style="left:998.5px;top:786.25px;width:69.0px;text-align:center;font:12px/14px 'Liberation Sans';color:#000;white-space:pre">Добавить</div>
<div class="a" style="left:1074.5px;top:782px;width:71.00px;height:22.50px;background:linear-gradient(#f3f3f3 0,#ebebeb 48%,#dddddd 52%,#cfcfcf 100%);border:1px solid #707070;border-radius:3px;box-shadow:inset 0 0 0 1px rgba(255,255,255,.75)"></div>
<div class="a" style="left:1074.5px;top:786.25px;width:71.0px;text-align:center;font:12px/14px 'Liberation Sans';color:#000;white-space:pre">Обновить</div>
<div class="a" style="left:1245px;top:782px;width:63.50px;height:22.50px;background:linear-gradient(#f3f3f3 0,#ebebeb 48%,#dddddd 52%,#cfcfcf 100%);border:1px solid #707070;border-radius:3px;box-shadow:inset 0 0 0 1px rgba(255,255,255,.75)"></div>
<div class="a" style="left:1245px;top:786.25px;width:63.5px;text-align:center;font:12px/14px 'Liberation Sans';color:#000;white-space:pre">Удалить</div>
<div class="a" style="left:992.5px;top:815.5px;width:63.00px;height:21.50px;background:linear-gradient(#f3f3f3 0,#ebebeb 48%,#dddddd 52%,#cfcfcf 100%);border:1px solid #707070;border-radius:3px;box-shadow:inset 0 0 0 1px rgba(255,255,255,.75)"></div>
<div class="a" style="left:992.5px;top:819.25px;width:63.0px;text-align:center;font:12px/14px 'Liberation Sans';color:#000;white-space:pre">OK</div>
<div class="a" style="left:1318px;top:511px;width:184.50px;height:291.00px;border:1px solid #d5dfe5;border-radius:3px;box-shadow:inset 1px 1px 0 #fff,1px 1px 0 #fff"></div>
<div class="a" style="left:1323px;top:504px;width:85.00px;height:12.00px;background:#f0f0f0"></div>
<div class="a" style="left:1326.5px;top:503.94px;font:12px/14.4px 'Liberation Sans';color:#000;white-space:pre;">Текущий болт</div>
<div class="a" style="left:1323px;top:528.94px;font:12px/14.4px 'Liberation Sans';color:#000;white-space:pre;">Тип:</div>
<div class="a" style="left:1421.5px;top:517.5px;width:75.50px;height:35.00px;background:#fff;border:1px solid #d9dce0;border-radius:2px"></div>
<svg class="a" style="left:1426px;top:523px" width="65" height="24" viewBox="0 0 65 24"><rect x="1.5" y="1.5" width="8" height="20" fill="#fff" stroke="#111"/><rect x="9.5" y="7.5" width="36" height="9" fill="#fff" stroke="#111"/><polygon points="58,10 65,10 61.5,13.5" fill="#111"/></svg>
<div class="a" style="left:1323px;top:565.94px;font:12px/14.4px 'Liberation Sans';color:#000;white-space:pre;">Стандарт:</div>
<div class="a" style="left:1323px;top:590.94px;font:12px/14.4px 'Liberation Sans';color:#000;white-space:pre;">Диаметр:</div>
<div class="a" style="left:1323px;top:615.94px;font:12px/14.4px 'Liberation Sans';color:#000;white-space:pre;">Длина:</div>
<div class="a" style="left:1323px;top:640.94px;font:12px/14.4px 'Liberation Sans';color:#000;white-space:pre;">Вес:</div>
<div class="a" style="left:1421.5px;top:563.5px;width:79.00px;height:18.00px;background:#fff;border:1px solid #d6d9de;border-top-color:#b4b8bf;border-radius:2px"></div>
<div class="a" style="left:1426px;top:565.44px;font:12px/14.4px 'Liberation Sans';color:#000;white-space:pre;">HILTI</div>
<div class="a" style="left:1421.5px;top:588.5px;width:79.00px;height:18.00px;background:#fff;border:1px solid #d6d9de;border-top-color:#b4b8bf;border-radius:2px"></div>
<div class="a" style="left:1426px;top:590.44px;font:12px/14.4px 'Liberation Sans';color:#000;white-space:pre;">5.50</div>
<div class="a" style="left:1421.5px;top:613.5px;width:79.00px;height:18.00px;background:#fff;border:1px solid #d6d9de;border-top-color:#b4b8bf;border-radius:2px"></div>
<div class="a" style="left:1426px;top:615.44px;font:12px/14.4px 'Liberation Sans';color:#000;white-space:pre;">0.00</div>
<div class="a" style="left:1421.5px;top:638.5px;width:79.00px;height:18.00px;background:#fff;border:1px solid #d6d9de;border-top-color:#b4b8bf;border-radius:2px"></div>
<div class="a" style="left:1426px;top:640.44px;font:12px/14.4px 'Liberation Sans';color:#000;white-space:pre;">0.00</div>
<div class="a" style="left:1320.5px;top:662px;width:96.00px;height:18.50px;background:#fff;border:1px solid #d6d9de;border-top-color:#b4b8bf;border-radius:2px"></div>
<div class="a" style="left:1326px;top:664.19px;font:12px/14.4px 'Liberation Sans';color:#000;white-space:pre;">-</div>
<div class="a" style="left:1421.5px;top:662px;width:79.50px;height:18.50px;background:#fff;border:1px solid #d6d9de;border-top-color:#b4b8bf;border-radius:2px"></div>
<div class="a" style="left:1426px;top:664.19px;font:12px/14.4px 'Liberation Sans';color:#000;white-space:pre;">0.00</div>
<div class="a" style="left:1320.5px;top:685px;width:96.00px;height:18.50px;background:#fff;border:1px solid #d6d9de;border-top-color:#b4b8bf;border-radius:2px"></div>
<div class="a" style="left:1326px;top:687.19px;font:12px/14.4px 'Liberation Sans';color:#000;white-space:pre;">верх. толщ.</div>
<div class="a" style="left:1421.5px;top:685px;width:79.50px;height:18.50px;background:#fff;border:1px solid #d6d9de;border-top-color:#b4b8bf;border-radius:2px"></div>
<div class="a" style="left:1426px;top:687.19px;font:12px/14.4px 'Liberation Sans';color:#000;white-space:pre;">3.00</div>
<div class="a" style="left:1320.5px;top:708px;width:96.00px;height:18.50px;background:#fff;border:1px solid #d6d9de;border-top-color:#b4b8bf;border-radius:2px"></div>
<div class="a" style="left:1326px;top:710.19px;font:12px/14.4px 'Liberation Sans';color:#000;white-space:pre;">-</div>
<div class="a" style="left:1421.5px;top:708px;width:79.50px;height:18.50px;background:#fff;border:1px solid #d6d9de;border-top-color:#b4b8bf;border-radius:2px"></div>
<div class="a" style="left:1426px;top:710.19px;font:12px/14.4px 'Liberation Sans';color:#000;white-space:pre;">0.00</div>
<div class="a" style="left:1320.5px;top:731px;width:96.00px;height:18.50px;background:#fff;border:1px solid #d6d9de;border-top-color:#b4b8bf;border-radius:2px"></div>
<div class="a" style="left:1326px;top:733.19px;font:12px/14.4px 'Liberation Sans';color:#000;white-space:pre;">-</div>
<div class="a" style="left:1421.5px;top:731px;width:79.50px;height:18.50px;background:#fff;border:1px solid #d6d9de;border-top-color:#b4b8bf;border-radius:2px"></div>
<div class="a" style="left:1426px;top:733.19px;font:12px/14.4px 'Liberation Sans';color:#000;white-space:pre;">0.00</div>
<div class="a" style="left:1320.5px;top:754px;width:96.00px;height:18.50px;background:#fff;border:1px solid #d6d9de;border-top-color:#b4b8bf;border-radius:2px"></div>
<div class="a" style="left:1326px;top:756.19px;font:12px/14.4px 'Liberation Sans';color:#000;white-space:pre;">-</div>
<div class="a" style="left:1421.5px;top:754px;width:79.50px;height:18.50px;background:#fff;border:1px solid #d6d9de;border-top-color:#b4b8bf;border-radius:2px"></div>
<div class="a" style="left:1426px;top:756.19px;font:12px/14.4px 'Liberation Sans';color:#000;white-space:pre;">0.00</div>
<div class="a" style="left:1320.5px;top:777px;width:96.00px;height:18.50px;background:#fff;border:1px solid #d6d9de;border-top-color:#b4b8bf;border-radius:2px"></div>
<div class="a" style="left:1326px;top:779.19px;font:12px/14.4px 'Liberation Sans';color:#000;white-space:pre;">верх. диам.</div>
<div class="a" style="left:1421.5px;top:777px;width:79.50px;height:18.50px;background:#fff;border:1px solid #d6d9de;border-top-color:#b4b8bf;border-radius:2px"></div>
<div class="a" style="left:1426px;top:779.19px;font:12px/14.4px 'Liberation Sans';color:#000;white-space:pre;">12.00</div>
<svg class="a" style="left:0;top:0" width="1617" height="925" viewBox="0 0 1617 925">
<g fill="none" stroke="#2eab44" stroke-linecap="round" stroke-linejoin="round">
<path stroke-width="3" d="M900.0,56.5 C902.9,55.6 911.8,52.6 917.3,51.3 C922.8,50.0 926.2,49.5 933.0,48.8 C939.8,48.1 948.6,47.5 958.0,47.2 C967.4,46.9 980.0,46.2 989.4,47.2 C998.8,48.2 1006.1,50.4 1014.5,53.5 C1022.9,56.6 1030.2,60.5 1039.6,66.0 C1049.0,71.5 1061.1,78.6 1071.0,86.4 C1080.9,94.2 1090.1,104.1 1099.0,113.0 C1107.9,121.9 1116.9,130.5 1124.2,139.7 C1131.5,148.9 1138.2,158.6 1143.0,168.0 C1147.8,177.4 1151.3,186.1 1153.0,196.0 C1154.7,205.9 1154.7,217.6 1153.0,227.5 C1151.3,237.4 1148.3,247.9 1143.0,255.7 C1137.7,263.4 1127.3,269.2 1121.0,274.0 C1114.7,278.8 1115.2,280.3 1105.0,284.6 C1094.8,288.9 1072.6,296.1 1060.0,299.6 C1047.4,303.1 1044.9,304.5 1029.5,305.5 C1014.1,306.5 981.4,305.9 967.6,305.5 C953.8,305.1 953.8,304.2 946.6,303.3 C939.4,302.4 930.1,301.4 924.3,300.2 C918.5,299.0 918.0,298.0 912.0,295.9 C906.0,293.8 897.1,291.7 888.4,287.8 C879.7,283.9 867.2,277.0 860.0,272.4 C852.8,267.8 852.2,266.4 845.0,260.0 C837.8,253.6 825.8,244.5 817.0,233.8 C808.2,223.2 797.2,205.6 792.0,196.1 C786.8,186.6 787.1,183.8 785.5,177.0 C783.9,170.2 783.0,163.7 782.5,155.4 C782.0,147.2 782.3,134.3 782.7,127.5 C783.1,120.7 783.3,118.6 784.7,114.5 C786.1,110.4 788.6,106.2 791.0,102.9 C793.4,99.6 795.9,97.3 799.0,94.4 C802.1,91.5 806.4,87.3 809.4,85.3 C812.4,83.3 814.2,84.0 817.0,82.5 C819.8,81.0 821.4,79.0 826.0,76.5 C830.6,74.0 838.1,70.2 844.4,67.8 C850.7,65.4 858.1,63.4 864.0,62.0 C869.9,60.6 872.7,60.9 879.5,59.5 C886.3,58.1 895.9,55.2 904.8,53.5 C913.7,51.8 923.8,50.3 933.0,49.4 C942.2,48.5 955.5,48.2 960.0,48.0"/>
<path stroke-width="3" d="M1026.2,481.6 C1023.0,483.1 1013.1,487.1 1006.9,490.5 C1000.7,493.9 995.7,498.1 989.0,502.3 C982.3,506.5 971.7,512.8 966.8,515.7 C961.9,518.7 962.4,518.0 959.5,520.0 C956.6,522.0 953.7,524.5 949.7,527.6 C945.7,530.7 939.8,535.3 935.7,538.4 C931.6,541.5 928.1,544.3 924.9,546.0 C921.6,547.7 919.3,547.4 916.2,548.6 C913.1,549.9 909.6,551.4 906.5,553.5 C903.4,555.6 900.3,558.1 897.8,561.0 C895.3,563.9 893.7,566.5 891.4,570.8 C889.1,575.1 886.0,581.8 883.8,587.0 C881.6,592.2 879.5,595.9 878.4,602.2 C877.3,608.5 876.5,615.1 877.0,624.6 C877.5,634.1 877.9,647.7 881.6,659.3 C885.3,670.9 892.5,683.9 899.0,694.0 C905.5,704.1 913.4,710.6 920.6,720.0 C927.8,729.4 932.9,739.4 942.3,750.2 C951.7,761.0 964.8,775.4 977.0,784.8 C989.2,794.2 1000.7,800.0 1015.8,806.5 C1030.9,813.0 1050.5,818.8 1067.8,823.8 C1085.1,828.8 1100.2,833.6 1119.7,836.8 C1139.2,840.0 1159.4,841.1 1184.7,843.2 C1210.0,845.3 1252.1,848.5 1271.3,849.5 C1290.5,850.5 1285.4,850.2 1300.0,849.0 C1314.6,847.8 1339.2,845.2 1359.0,842.0 C1378.8,838.8 1402.7,833.2 1419.0,830.0 C1435.3,826.8 1448.5,825.5 1457.0,823.0 C1465.5,820.5 1464.5,818.2 1470.0,815.0 C1475.5,811.8 1483.8,809.3 1490.0,804.0 C1496.2,798.7 1501.8,793.7 1507.0,783.0 C1512.2,772.3 1517.0,756.7 1521.0,740.0 C1525.0,723.3 1528.3,699.7 1531.0,683.0 C1533.7,666.3 1535.8,653.8 1537.0,640.0 C1538.2,626.2 1538.0,611.9 1538.0,600.0 C1538.0,588.1 1538.7,578.9 1537.0,568.8 C1535.3,558.7 1532.7,549.5 1527.6,539.3 C1522.5,529.1 1515.0,518.4 1506.6,507.8 C1498.2,497.2 1488.2,484.1 1477.0,476.0 C1465.8,467.9 1454.7,463.2 1439.3,459.0 C1423.9,454.8 1404.2,453.0 1384.6,451.0 C1365.0,449.0 1346.0,447.6 1321.5,446.8 C1297.0,446.0 1262.0,445.9 1237.5,446.0 C1213.0,446.1 1190.7,447.0 1174.4,447.7 C1158.2,448.4 1151.1,448.8 1140.0,450.4 C1128.9,451.9 1118.1,454.8 1107.8,457.0 C1097.5,459.2 1087.9,461.2 1078.0,463.7 C1068.1,466.2 1057.0,468.9 1048.4,471.9 C1039.8,474.9 1033.1,478.5 1026.2,481.6 C1019.3,484.7 1010.1,489.0 1006.9,490.5"/>
<path stroke-width="2.8" d="M915,560 L921,550.5 C923,547.5 926,546.6 930,547 L940,548.6"/>
<path stroke-width="3" d="M921.0,50.5 C924.2,50.0 932.7,48.2 940.0,47.5 C947.3,46.8 956.7,46.5 965.0,46.3 C973.3,46.1 983.8,46.1 990.0,46.3 C996.2,46.5 1000.0,47.3 1002.0,47.5"/>
<path stroke-width="3" d="M733,127.5 L730.7,255.3"/>
<path stroke-width="3" d="M684.7,196.5 C686.0,196.2 689.2,196.8 692.5,194.8 C695.8,192.8 700.9,188.7 704.6,184.4 C708.4,180.1 712.0,174.1 715.0,168.8 C718.0,163.5 720.8,155.9 722.8,152.4 C724.8,148.9 725.3,150.1 727.0,148.0 C728.7,145.9 732.0,141.3 733.0,140.0"/>
<path stroke-width="3.4" d="M766.4,602.5 C767.3,601.9 769.9,600.0 772.0,599.0 C774.1,598.0 776.3,596.8 779.0,596.2 C781.7,595.6 785.2,595.5 788.0,595.5 C790.8,595.5 793.5,595.6 796.0,596.5 C798.5,597.4 801.1,599.1 803.0,601.0 C804.9,602.9 806.4,605.2 807.5,608.0 C808.6,610.8 809.2,614.3 809.5,618.0 C809.8,621.7 810.1,626.3 809.5,630.0 C808.9,633.7 807.9,637.2 806.0,640.0 C804.1,642.8 801.1,644.8 798.0,647.0 C794.9,649.2 792.1,650.0 787.6,653.0 C783.1,656.0 776.8,660.7 771.0,665.0 C765.2,669.3 758.3,674.8 752.8,679.0 C747.2,683.2 742.0,687.3 737.7,690.0 C733.4,692.7 728.8,694.2 727.0,695.0"/>
<path stroke-width="3" d="M776.0,599.0 C775.8,599.8 774.7,602.2 774.5,604.0 C774.3,605.8 774.1,607.7 775.0,609.5 C775.9,611.3 779.2,614.1 780.0,615.0"/>
<path stroke-width="2.6" d="M808.0,622.0 C807.8,624.3 808.2,632.2 806.5,636.0 C804.8,639.8 801.6,642.0 798.0,645.0 C794.4,648.0 789.7,650.5 785.0,654.0 C780.3,657.5 775.0,662.2 770.0,666.0 C765.0,669.8 759.8,673.3 755.0,677.0 C750.2,680.7 743.3,686.2 741.0,688.0"/>
<path stroke-width="2.4" d="M740.0,692.0 C742.0,690.3 748.5,684.2 752.0,682.0 C755.5,679.8 759.0,679.0 761.0,679.0 C763.0,679.0 764.3,680.7 764.0,682.0 C763.7,683.3 761.7,685.5 759.0,687.0 C756.3,688.5 751.5,689.8 748.0,691.0 C744.5,692.2 739.7,693.5 738.0,694.0"/>
<path stroke-width="3.6" d="M727,695.5 C750,697 790,698.5 819,699.5"/>
<path stroke-width="3.6" d="M736,700 C760,701 790,701.5 812,702"/>
<path stroke-width="3.6" d="M741,704.8 C760,705.5 785,706 798,706"/>
</g></svg>
</body></html>
